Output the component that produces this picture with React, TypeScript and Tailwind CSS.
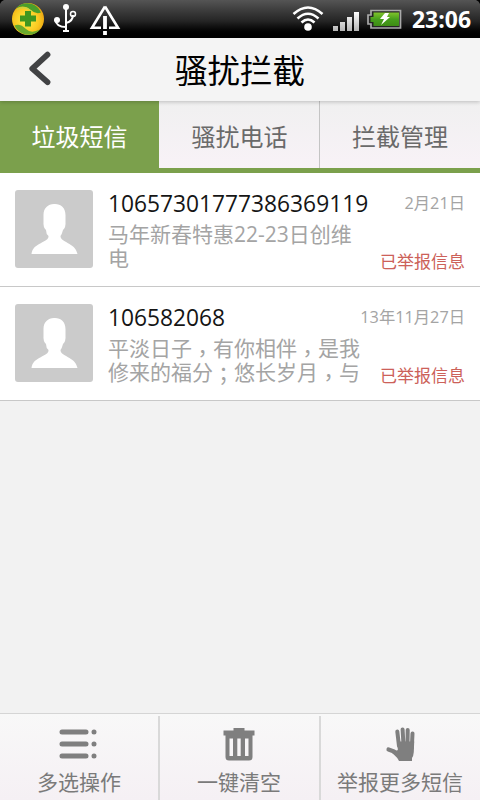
import clsx from "clsx";

const tabs = ["垃圾短信", "骚扰电话", "拦截管理"];

const messages = [
  {
    sender: "10657301777386369119",
    preview: ["马年新春特惠22-23日创维", "电"],
    date: "2月21日",
    status: "已举报信息",
  },
  {
    sender: "106582068",
    preview: ["平淡日子，有你相伴，是我", "修来的福分；悠长岁月，与"],
    date: "13年11月27日",
    status: "已举报信息",
  },
];

const StatusBar = () => (
  <div className="flex h-[38px] shrink-0 items-center bg-linear-to-b from-[#555555] via-[#252525] via-55% to-black">
    <svg width="130" height="38" viewBox="0 0 130 38" fill="none">
      <defs>
        <radialGradient id="ball" cx="0.45" cy="0.55" r="0.6">
          <stop offset="0" stopColor="#fff04a" />
          <stop offset="0.65" stopColor="#f9c820" />
          <stop offset="1" stopColor="#e8a010" />
        </radialGradient>
      </defs>
      <path d="M0 0h4Q1 1 0 4z" fill="#000" />
      <circle cx="28" cy="19" r="16" fill="url(#ball)" />
      <path d="M16 8.500C22 1 36 1 41 12.500Q36 15 31 10Q24 4 16 8.500Z" fill="#4a9e2c" />
      <path d="M17 9.500Q25 5 32 11.500" stroke="#b8dc50" strokeWidth="1" />
      <path d="M14.500 25.500C19 36 34 38 40 29.500Q31 34 26 29Q20 23 14.500 25.500Z" fill="#6aaa2c" />
      <path d="M25 11h6v4.500h5v6h-5v5h-6v-5h-5v-6h5z" fill="#3f961f" />
      <g stroke="#fff" strokeWidth="2">
        <path d="M66 7v24M66 27C60 27 56 25 55.500 20M66 23C70 22 73 19 73 15" />
        <circle cx="73" cy="14" r="2.500" strokeWidth="1.500" />
        <path d="M63 31h6" />
      </g>
      <circle cx="66" cy="7" r="3" fill="#fff" />
      <circle cx="57" cy="20" r="3" fill="#fff" />
      <path d="M105 6.500L92 27.800h9M105 6.500L118 27.800h-9" stroke="#fff" strokeWidth="2.600" />
      <path d="M105 16v13M105 31v4" stroke="#fff" strokeWidth="3.800" />
    </svg>
    <svg className="ml-auto" width="200" height="38" viewBox="280 0 200 38" fill="none">
      <defs>
        <linearGradient id="cell" x1="0" x2="0" y1="0" y2="1">
          <stop offset="0" stopColor="#80c42c" />
          <stop offset="0.5" stopColor="#479f1c" />
          <stop offset="1" stopColor="#3d8c14" />
        </linearGradient>
        <linearGradient id="bars" x1="0" x2="0" y1="12" y2="31" gradientUnits="userSpaceOnUse">
          <stop offset="0" stopColor="#fff" />
          <stop offset="1" stopColor="#b5b5b5" />
        </linearGradient>
      </defs>
      <path d="M476 0h4v4Q479 1 476 0z" fill="#000" />
      <circle cx="308" cy="27" r="3.800" fill="#fff" />
      <path
        d="M293.500 14Q308 1 322.500 14M297.500 18.500Q308 9 318.500 18.500M301.500 22.500Q308 16.500 314.500 22.500"
        stroke="#fff"
        strokeWidth="2.600"
      />
      <path d="M333 26h5v5h-5zM340 22h5v9h-5zM347 17h5v14h-5zM354 12h5v19h-5z" fill="url(#bars)" />
      <path d="M371 10.500h29.500v17.500h-29.500v-4h-3v-9h3z" fill="#252525" stroke="#aaa" strokeWidth="1.700" />
      <path d="M373.500 12.500h25.500v13.500h-25.500v-4h-3v-5h3z" fill="url(#cell)" />
      <path d="M385 13h4l-2 4h3l-9 8 3-6h-4z" fill="#fff" />
      <text
        x="412"
        y="28"
        fill="#fff"
        textLength="59"
        lengthAdjust="spacingAndGlyphs"
        className="font-['Open_Sans'] text-[23px] font-bold"
      >
        23:06
      </text>
    </svg>
  </div>
);

const Header = () => (
  <header className="relative z-10 flex h-[63px] shrink-0 items-center justify-center bg-[#f4f4f4] shadow-[0_1px_4px_rgba(0,0,0,0.22)]">
    <svg className="absolute top-[11px] left-[28px]" width="24" height="40" viewBox="0 0 24 40" fill="none">
      <path d="M19.500 5.700L4.300 19.700L19.500 33.200" stroke="#414244" strokeWidth="5.800" strokeLinecap="round" strokeLinejoin="round" />
    </svg>
    <h1 className="pt-[2px] text-[32.500px] leading-[63px] text-black">骚扰拦截</h1>
  </header>
);

const Avatar = () => (
  <svg className="shrink-0" width="78" height="78" viewBox="0 0 78 78">
    <rect width="78" height="78" rx="3" fill="#cbcbcb" />
    <path
      d="M39 14C45 13.500 50.500 17 50.500 25V32Q51 37 48 40Q47 44 45.500 46C45.500 53 60 52 62.500 64H16.500C18 52 34 53 33.500 46Q31 44 31 40Q28 37 28.500 32V25C28.500 18 33 14 39 14Z"
      fill="#fff"
    />
  </svg>
);

// Full-width punctuation is centred in its cell, low on the line
const Preview = ({ text }: { text: string }) => (
  <>
    {text.split(/([，；])/).map((part, i) =>
      /[，；]/.test(part) ? (
        <span
          key={i}
          lang="zh-TW"
          className={clsx(
            "relative font-['Open_Sans','Noto_Sans_CJK_TC',sans-serif]",
            part === "，" ? "top-[5px]" : "top-[2px]",
          )}
        >
          {part}
        </span>
      ) : (
        part
      ),
    )}
  </>
);

const ListIcon = () => (
  <svg width="40" height="36" viewBox="0 0 40 36" fill="none" stroke="#7f7f7f" strokeWidth="5" strokeLinecap="round">
    <path d="M3 6h24M3 18h24M3 30h24M35 6h.01M35 18h.01M35 30h.01" />
  </svg>
);

const TrashIcon = () => (
  <svg width="40" height="36" viewBox="0 0 40 36" fill="#7f7f7f">
    <path
      fillRule="evenodd"
      d="M14.500 2h11v2.500H35.500V9.500h-2V31q0 3.500-3.500 3.500H10Q6.500 34.500 6.500 31V9.500H4.500V4.500h10zM10.500 12.500v17.500h3.500V12.500zM18.300 12.500v17.500h3.400V12.500zM26 12.500v17.500h3.500V12.500z"
    />
  </svg>
);

const HandIcon = () => (
  <svg width="40" height="36" viewBox="0 0 40 36" fill="none" stroke="#7f7f7f" strokeLinecap="round" strokeLinejoin="round">
    <path d="M17.300 5.500L19 20M22.600 3.500L23.500 19M27.700 4L27.500 19M32.500 7.500L31.800 22" strokeWidth="4" />
    <path d="M8.500 23.500L14 25.500L18 28" strokeWidth="4.200" />
    <path d="M17.500 15.500H34.200L33.800 26Q33.500 30 32 32V35H19Q18 32 12 27L17.800 24Z" fill="#7f7f7f" stroke="none" />
  </svg>
);

const actions = [
  { label: "多选操作", icon: <ListIcon /> },
  { label: "一键清空", icon: <TrashIcon /> },
  { label: "举报更多短信", icon: <HandIcon /> },
];

export default function App() {
  return (
    <div className="flex h-[800px] w-[480px] flex-col overflow-hidden bg-[#f2f2f2] font-['Open_Sans','Noto_Sans_CJK_SC',sans-serif]">
      <StatusBar />
      <Header />
      <nav className="grid h-[72px] shrink-0 grid-cols-3 border-b-[5px] border-[#7ba04c] bg-linear-to-b from-[#f0f0f0] to-[#f8f2f7]">
        {tabs.map((tab, i) => (
          <button
            key={tab}
            className={clsx(
              "h-[67px] pt-[5px] text-[24px] leading-[62px]",
              i === 0 ? "mr-px bg-[#7ba04c] text-white" : "text-[#6a6a6a]",
              i === 1 && "border-r border-[#c4c4c4]",
            )}
          >
            {tab}
          </button>
        ))}
      </nav>
      <ul className="flex-1">
        {messages.map((message) => (
          <li key={message.sender} className="flex h-[114px] border-b border-[#c8c8c8] bg-white pt-[17px] pr-[15px] pl-[15px]">
            <Avatar />
            <div className="ml-[15px] min-w-0 flex-1 whitespace-nowrap">
              <p className="text-[22.750px] leading-[28px] text-[#151515]">{message.sender}</p>
              <div className="mt-[4px] text-[21px] leading-[24px] text-[#a4a4a4]">
                {message.preview.map((line) => (
                  <p key={line}>
                    <Preview text={line} />
                  </p>
                ))}
              </div>
            </div>
            <div className="flex h-[86px] shrink-0 flex-col items-end justify-between">
              <span className="text-[16.300px] leading-[26px] text-[#a4a4a4]">{message.date}</span>
              <span className="text-[17px] leading-[29px] text-[#cc6159]">{message.status}</span>
            </div>
          </li>
        ))}
      </ul>
      <footer className="grid h-[87px] shrink-0 grid-cols-3 border-t border-[#d5d5d5] bg-linear-to-b from-[#f8f8f8] to-[#f5f0f4] pt-[2px]">
        {actions.map(({ label, icon }, i) => (
          <button
            key={label}
            className={clsx(
              "flex flex-col items-center pt-[10px] text-[21px] leading-[28px] whitespace-nowrap text-[#7a7a7a]",
              i < 2 && "border-r-2 border-[#d9d9d9]",
              i === 1 && "-mr-px pr-px",
            )}
          >
            {icon}
            <span className="mt-[6px]">{label}</span>
          </button>
        ))}
      </footer>
    </div>
  );
}
